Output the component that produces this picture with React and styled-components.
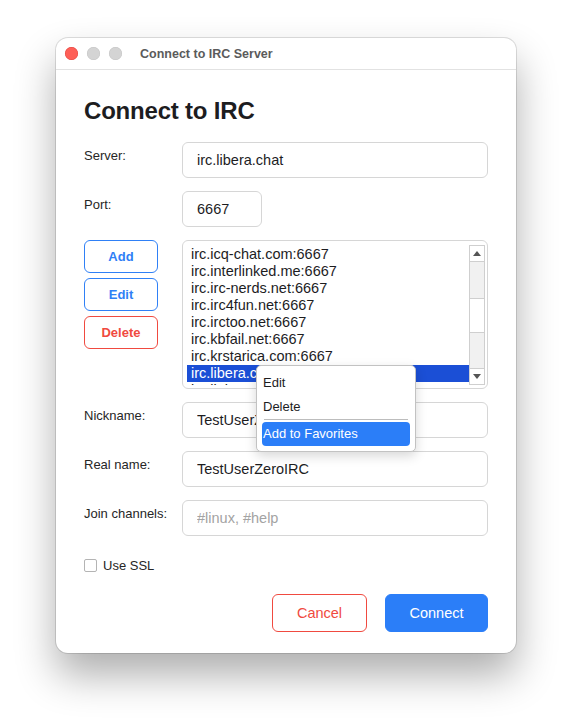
import React from "react";
import styled, { createGlobalStyle } from "styled-components";

const GlobalStyle = createGlobalStyle`
  html, body {
    margin: 0;
    padding: 0;
    background: #ffffff;
  }
  body {
    font-family: "Liberation Sans", Arial, Helvetica, sans-serif;
    color: #1d1d1f;
  }
`;

const servers = [
  "irc.icq-chat.com:6667",
  "irc.interlinked.me:6667",
  "irc.irc-nerds.net:6667",
  "irc.irc4fun.net:6667",
  "irc.irctoo.net:6667",
  "irc.kbfail.net:6667",
  "irc.krstarica.com:6667",
  "irc.libera.chat:6667",
  "irc.link-net.be:6667",
];

const App = () => {
  return (
    <Page>
      <GlobalStyle />
      <Window>
        <TitleBar>
          <Light color="#fe5f57" border="#e0443e" />
          <Light color="#d4d4d4" border="#c4c4c4" />
          <Light color="#d4d4d4" border="#c4c4c4" />
          <WindowTitle>Connect to IRC Server</WindowTitle>
        </TitleBar>

        <Body>
          <Heading>Connect to IRC</Heading>

          <Form>
            <Row>
              <Label>Server:</Label>
              <Field defaultValue="irc.libera.chat" />
            </Row>
            <Row>
              <Label>Port:</Label>
              <Field defaultValue="6667" width="80px" />
            </Row>
            <Row>
              <ButtonStack>
                <SideButton tone="blue">Add</SideButton>
                <SideButton tone="blue">Edit</SideButton>
                <SideButton tone="red">Delete</SideButton>
              </ButtonStack>
              <ListBox>
                <ListRows>
                  {servers.map((s, i) => (
                    <ListItem key={s} selected={i === 7}>
                      {s}
                    </ListItem>
                  ))}
                </ListRows>
                <ScrollBar>
                  <ArrowBox>
                    <Arrow viewBox="0 0 8 5">
                      <path d="M0 5 L4 0 L8 5 Z" />
                    </Arrow>
                  </ArrowBox>
                  <Track />
                  <Thumb />
                  <Track />
                  <ArrowBox bottom>
                    <Arrow viewBox="0 0 8 5">
                      <path d="M0 0 L4 5 L8 0 Z" />
                    </Arrow>
                  </ArrowBox>
                </ScrollBar>
              </ListBox>
              <Menu>
                <MenuItem>Edit</MenuItem>
                <MenuItem>Delete</MenuItem>
                <MenuSeparator />
                <MenuItem active>Add to Favorites</MenuItem>
              </Menu>
            </Row>
            <Row>
              <Label>Nickname:</Label>
              <Field defaultValue="TestUserZeroIRC" />
            </Row>
            <Row>
              <Label>Real name:</Label>
              <Field defaultValue="TestUserZeroIRC" />
            </Row>
            <Row>
              <Label>Join channels:</Label>
              <Field placeholder="#linux, #help" />
            </Row>
          </Form>

          <CheckRow>
            <CheckBox />
            <CheckText>Use SSL</CheckText>
          </CheckRow>

          <Footer>
            <FooterButton kind="cancel">Cancel</FooterButton>
            <FooterButton kind="primary">Connect</FooterButton>
          </Footer>
        </Body>
      </Window>
    </Page>
  );
};

export default App;

const Page = styled.div`
  width: 572px;
  height: 727px;
  padding: 38px 0 0 56px;
  box-sizing: border-box;
  overflow: hidden;
`;

const Window = styled.div`
  width: 460px;
  height: 615px;
  background: #ffffff;
  border-radius: 12px;
  box-shadow: 0 0 0 1px rgba(0, 0, 0, 0.12), 0 22px 40px rgba(0, 0, 0, 0.32);
  display: flex;
  flex-direction: column;
  overflow: hidden;
`;

const TitleBar = styled.div`
  height: 32px;
  flex: none;
  display: flex;
  align-items: center;
  gap: 9px;
  padding-left: 9px;
  border-bottom: 1px solid #e2e2e2;
  box-sizing: border-box;
`;

const Light = styled.span`
  width: 13px;
  height: 13px;
  border-radius: 50%;
  background: ${({ color }) => color};
  box-shadow: inset 0 0 0 0.5px ${({ border }) => border};
`;

const WindowTitle = styled.span`
  margin-left: 9px;
  font-size: 12.5px;
  font-weight: 700;
  color: #5b5b5b;
`;

const Body = styled.div`
  flex: 1;
  display: flex;
  flex-direction: column;
  padding: 28px 28px 21px;
`;

const Heading = styled.h1`
  margin: 0 0 18px;
  font-size: 24px;
  line-height: 26px;
  font-weight: 700;
  color: #1d1d1f;
  letter-spacing: -0.2px;
`;

const Form = styled.div`
  display: flex;
  flex-direction: column;
  gap: 13px;
`;

const Row = styled.div`
  position: relative;
  display: grid;
  grid-template-columns: 98px 1fr;
  align-items: start;
`;

const Label = styled.div`
  padding-top: 6px;
  font-size: 13px;
  line-height: 16px;
  color: #262626;
`;

const Field = styled.input`
  width: ${({ width }) => width || "100%"};
  height: 36px;
  box-sizing: border-box;
  border: 1px solid #d6d6d6;
  border-radius: 6px;
  padding: 0 14px;
  font-family: inherit;
  font-size: 14.5px;
  color: #1d1d1f;
  background: #ffffff;
  outline: none;

  &::placeholder {
    color: #a3a3a3;
  }
`;

const ButtonStack = styled.div`
  display: flex;
  flex-direction: column;
  gap: 5px;
`;

const SideButton = styled.button`
  width: 74px;
  height: 33px;
  border-radius: 6px;
  background: #ffffff;
  font-family: inherit;
  font-size: 13px;
  font-weight: 700;
  border: 1px solid ${({ tone }) => (tone === "red" ? "#f04a40" : "#2f80f6")};
  color: ${({ tone }) => (tone === "red" ? "#f04a40" : "#2f80f6")};
  padding: 0;
`;

const ListBox = styled.div`
  height: 149px;
  box-sizing: border-box;
  border: 1px solid #d6d6d6;
  border-radius: 6px;
  padding: 4px 2px 3px 4px;
  display: flex;
`;

const ListRows = styled.div`
  flex: 1;
  overflow: hidden;
  padding-top: 1px;
`;

const ListItem = styled.div`
  height: 17px;
  line-height: 17px;
  padding-left: 4px;
  font-size: 14.5px;
  white-space: nowrap;
  color: ${({ selected }) => (selected ? "#ffffff" : "#1d1d1f")};
  background: ${({ selected }) => (selected ? "#1b4fd6" : "transparent")};
`;

const ScrollBar = styled.div`
  width: 16px;
  flex: none;
  display: flex;
  flex-direction: column;
  border: 1px solid #cfcfcf;
  box-sizing: border-box;
  background: #f1f1f1;
`;

const ArrowBox = styled.div`
  height: 15px;
  flex: none;
  display: flex;
  align-items: center;
  justify-content: center;
  background: #ffffff;
  border-${({ bottom }) => (bottom ? "top" : "bottom")}: 1px solid #cfcfcf;
`;

const Arrow = styled.svg`
  width: 8px;
  height: 5px;
  fill: #555555;
`;

const Track = styled.div`
  flex: 1;
  background: #f1f1f1;
`;

const Thumb = styled.div`
  height: 33px;
  flex: none;
  background: #ffffff;
  border-top: 1px solid #cfcfcf;
  border-bottom: 1px solid #cfcfcf;
`;

const Menu = styled.div`
  position: absolute;
  left: 172px;
  top: 125px;
  width: 160px;
  box-sizing: border-box;
  padding: 5px 5px 5px 5px;
  background: #ffffff;
  border: 1px solid #c2c2c2;
  border-radius: 5px;
  box-shadow: 0 4px 12px rgba(0, 0, 0, 0.16);
  z-index: 5;
`;

const MenuItem = styled.div`
  height: 24px;
  line-height: 24px;
  padding-left: 1px;
  border-radius: 4px;
  font-size: 13px;
  color: ${({ active }) => (active ? "#ffffff" : "#1d1d1f")};
  background: ${({ active }) => (active ? "#2b7ef8" : "transparent")};
`;

const MenuSeparator = styled.div`
  height: 1px;
  margin: 0 2px 2px 2px;
  background: #bdbdbd;
`;

const CheckRow = styled.div`
  display: flex;
  align-items: center;
  gap: 6px;
  margin-top: 22px;
`;

const CheckBox = styled.span`
  width: 13px;
  height: 13px;
  box-sizing: border-box;
  border: 1px solid #b4b4b4;
  border-radius: 2px;
  background: #ffffff;
`;

const CheckText = styled.span`
  font-size: 13px;
  color: #262626;
`;

const Footer = styled.div`
  margin-top: auto;
  display: flex;
  justify-content: flex-end;
  gap: 18px;
`;

const FooterButton = styled.button`
  height: 38px;
  border-radius: 6px;
  font-family: inherit;
  font-size: 14.5px;
  padding: 0;
  width: ${({ kind }) => (kind === "primary" ? "103px" : "95px")};
  border: 1px solid ${({ kind }) => (kind === "primary" ? "#2b7ef8" : "#f04a40")};
  background: ${({ kind }) => (kind === "primary" ? "#2b7ef8" : "#ffffff")};
  color: ${({ kind }) => (kind === "primary" ? "#ffffff" : "#f04a40")};
`;
